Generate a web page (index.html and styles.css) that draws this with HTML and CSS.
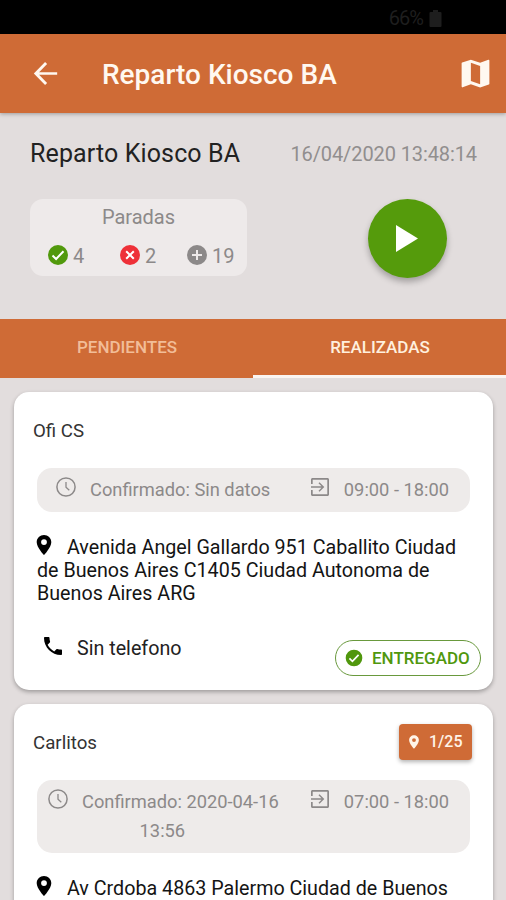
FILE: index.html
```html
<!DOCTYPE html>
<html lang="es">
<head>
<meta charset="utf-8">
<title>Reparto Kiosco BA</title>
<link rel="stylesheet" href="styles.css">
</head>
<body>
<svg class="defs" width="0" height="0">
  <symbol id="pin" viewBox="0 0 24 24"><path fill-rule="evenodd" d="M12 2C8 2 4.700 5.130 4.700 9.200c0 5.250 7.300 12.800 7.300 12.800s7.300-7.550 7.300-12.800C19.300 5.130 16 2 12 2zm0 10a2.900 2.900 0 0 1 0-5.800a2.900 2.900 0 0 1 0 5.800z"/></symbol>
  <symbol id="clock" viewBox="0 0 24 24"><circle cx="12" cy="12" r="9.100" fill="none" stroke="currentColor" stroke-width="1.500"/><path d="M12 7v5.300l3.300 3" fill="none" stroke="currentColor" stroke-width="1.300"/></symbol>
  <symbol id="exit" viewBox="0 0 24 24"><path d="M10.500 15.800L11.500 16.800l4.800-4.800-4.800-4.800-1 1L13.500 11.200H3v1.600h10.500zM19.500 3H4.500C3.700 3 3 3.700 3 4.500V9h1.700V4.700h14.600v14.600H4.700V15H3v4.500c0 .8.7 1.500 1.500 1.500h15c.8 0 1.500-.7 1.500-1.500v-15c0-.8-.7-1.500-1.500-1.500z"/></symbol>
  <symbol id="check" viewBox="0 0 24 24"><circle cx="12" cy="12" r="10"/><path d="M6.500 12.500l3.600 3.500 7.400-7.800" fill="none" stroke="#fff" stroke-width="2"/></symbol>
</svg>
<div class="status"><span>66%</span><svg viewBox="0 0 12 17" width="13" height="17"><path d="M3.500 0h5v2H11q1 0 1 1v13q0 1-1 1H1q-1 0-1-1V3q0-1 1-1h2.500z"/></svg></div>
<header class="bar">
  <svg class="back" viewBox="0 0 24 24"><path d="M20 11.100H7.600l5.500-5.600L11.700 4.100 4 12l7.700 7.900 1.400-1.400-5.500-5.600H20z"/></svg>
  <h1>Reparto Kiosco BA</h1>
  <svg class="map" viewBox="0 0 24 24"><path fill-rule="evenodd" d="M20.500 3l-.16.03L15 5.100 9 3 3.360 4.900c-.21.07-.36.250-.36.480V20.500c0 .28.220.5.5.5l.16-.03L9 18.900l6 2.100 5.640-1.900c.21-.07.360-.250.360-.480V3.500c0-.28-.22-.5-.5-.5zM15 19l-6-2.110V5l6 2.110V19z"/></svg>
</header>
<section class="summary">
  <div class="row"><h2>Reparto Kiosco BA</h2><time>16/04/2020 13:48:14</time></div>
  <div class="row lower">
    <div class="stops">
      <div class="label">Paradas</div>
      <div class="counts">
        <span class="ok"><svg class="ico"><use href="#check"/></svg>4</span>
        <span class="bad"><svg class="ico" viewBox="0 0 24 24"><circle cx="12" cy="12" r="10"/><path d="M8.200 8.200l7.600 7.600M15.800 8.200l-7.600 7.600" stroke="#fff" stroke-width="2"/></svg>2</span>
        <span class="more"><svg class="ico" viewBox="0 0 24 24"><circle cx="12" cy="12" r="10"/><path d="M12 7v10M7 12h10" stroke="#eeeaea" stroke-width="2"/></svg>19</span>
      </div>
    </div>
    <div class="play"><svg viewBox="0 0 22 27" width="22" height="27"><path d="M0 0l22 13.500L0 27z"/></svg></div>
  </div>
</section>
<nav class="tabs"><div>PENDIENTES</div><div class="active">REALIZADAS</div></nav>
<main>
  <article class="card">
    <div class="head"><h3>Ofi CS</h3></div>
    <div class="info">
      <div class="confirm"><svg class="ico"><use href="#clock"/></svg>Confirmado: Sin datos</div>
      <div class="hours"><svg class="ico"><use href="#exit"/></svg>09:00 - 18:00</div>
    </div>
    <p class="address"><svg class="ico"><use href="#pin"/></svg>Avenida Angel Gallardo 951 Caballito Ciudad<br>de Buenos Aires C1405 Ciudad Autonoma de<br>Buenos Aires ARG</p>
    <div class="foot">
      <div class="phone"><svg class="ico" viewBox="0 0 24 24"><path d="M6.620 10.790c1.440 2.830 3.760 5.140 6.590 6.590l2.200-2.200c.27-.27.670-.36 1.020-.24 1.120.37 2.330.570 3.570.570.550 0 1 .45 1 1V20c0 .55-.45 1-1 1-9.390 0-17-7.610-17-17 0-.55.450-1 1-1h3.500c.55 0 1 .45 1 1 0 1.250.2 2.450.570 3.570.110.350.030.740-.25 1.020l-2.200 2.200z"/></svg><span>Sin telefono</span></div>
      <div class="pill"><svg><use href="#check"/></svg><span>ENTREGADO</span></div>
    </div>
  </article>
  <article class="card">
    <div class="head"><h3>Carlitos</h3><div class="badge"><svg><use href="#pin"/></svg><span>1/25</span></div></div>
    <div class="info tall">
      <div class="confirm"><svg class="ico"><use href="#clock"/></svg>Confirmado: 2020-04-16<br>13:56</div>
      <div class="hours"><svg class="ico"><use href="#exit"/></svg>07:00 - 18:00</div>
    </div>
    <p class="address"><svg class="ico"><use href="#pin"/></svg>Av Crdoba 4863 Palermo Ciudad de Buenos</p>
  </article>
</main>
</body>
</html>
```

FILE: styles.css
```css
* { box-sizing: border-box; margin: 0; }
html { height: 900px; overflow: hidden; }
body { height: 900px; overflow: hidden; display: flex; flex-direction: column; background: #e2dddd; font: 400 20px/24px Roboto, sans-serif; color: #222; }
svg { display: block; flex: none; fill: currentColor; }
.defs { position: absolute; }
.ico { width: 24px; height: 24px; }
h1, h2, h3 { font-weight: 400; white-space: nowrap; }

.status { flex: none; height: 34px; background: #000; color: #1e1e1e; display: flex; align-items: center; justify-content: flex-end; gap: 6px; padding: 2px 64px 0 0; font-size: 20px; letter-spacing: -1px; }
.bar { flex: none; height: 79px; background: #cf6b36; color: #fff8f0; display: flex; align-items: center; padding: 0 12px 0 28px; box-shadow: 0 1px 4px rgba(0,0,0,.3); }
.back { width: 35px; height: 35px; }
.bar h1 { margin-left: 39px; font-size: 28px; font-weight: 500; line-height: 36px; flex: 1; padding-top: 2px; }
.map { width: 37px; height: 37px; }

.summary { flex: none; height: 206px; padding: 24px 29px 0 30px; }
.row { display: flex; justify-content: space-between; }
h2 { font-size: 25px; line-height: 33px; letter-spacing: .12px; }
time { color: #918e8e; line-height: 34px; letter-spacing: -.1px; white-space: nowrap; }
.lower { margin-top: 28px; padding-right: 30px; }
.stops { width: 217px; height: 77px; border-radius: 13px; background: #eeeaea; color: #8c8989; padding-top: 6px; }
.label { text-align: center; }
.counts { display: flex; margin-top: 14px; padding-left: 16px; }
.counts span { display: flex; gap: 3px; width: 72px; line-height: 27px; }
.counts .bad { width: 67px; }
.ok svg { color: #51990c; }
.bad svg { color: #ee3038; }
.play { width: 79px; height: 79px; border-radius: 50%; background: #559b0c; color: #fff; display: flex; align-items: center; justify-content: center; padding-right: 2px; box-shadow: 0 4px 6px rgba(0,0,0,.28); }

.tabs { flex: none; height: 59px; background: #cf6b36; display: flex; text-align: center; font-size: 17px; font-weight: 500; line-height: 56px; color: #f2bd98; }
.tabs div { width: 50%; padding-left: 1px; }
.tabs .active { color: #fff0de; border-bottom: 3px solid #faf4f1; }

.counts .ok { width: 72px; flex: none; }
.counts .bad, .counts .more { flex: none; }
.counts .more { width: 50px; }

main { flex: 1; min-height: 0; overflow: hidden; padding: 14px 13px 0 14px; display: flex; flex-direction: column; gap: 14px; }
.card { flex: none; height: 298px; background: #fff; border-radius: 15px; padding: 16px 12px 0 19px; box-shadow: 0 2px 4px rgba(0,0,0,.3); }
.head { height: 44px; display: flex; justify-content: space-between; align-items: center; padding-right: 9px; }
h3 { font-size: 18.700px; color: #333; padding-top: 1px; }
.info { width: 433px; height: 44px; margin: 16px 0 0 4px; border-radius: 15px; background: #eeebea; color: #8c8989; display: flex; justify-content: space-between; font-size: 18.300px; line-height: 29px; padding: 7px 21px 0 17px; white-space: nowrap; }
.info .ico { display: inline-block; vertical-align: top; margin-right: 12px; }
.confirm { text-align: center; }
.info.tall { height: 73px; padding-left: 9px; }
.address { margin: 24px 0 0 4px; color: #141414; font-size: 19.700px; line-height: 23px; white-space: nowrap; }
.address .ico { display: inline-block; vertical-align: top; margin: -3px 11px -4px -5px; color: #000; }
.foot { display: flex; justify-content: space-between; align-items: flex-start; margin-top: 35px; padding-left: 8px; }
.phone { display: flex; gap: 12px; color: #000; margin-top: -6px; }
.phone span { color: #222; font-size: 19.700px; line-height: 29px; }
.pill { width: 146px; height: 36px; border: 1.500px solid #69993d; border-radius: 18px; color: #50970d; display: flex; align-items: center; gap: 8px; padding-left: 8px; font-size: 17px; font-weight: 500; }
.pill svg { width: 20px; height: 20px; }
.badge { width: 73px; height: 36px; border-radius: 4px; background: #cf6b36; color: #fff4e8; display: flex; align-items: center; gap: 7px; padding-left: 7px; font-size: 16px; font-weight: 500; box-shadow: 0 2px 4px rgba(0,0,0,.3); }
.badge svg { width: 16px; height: 16px; }
```
